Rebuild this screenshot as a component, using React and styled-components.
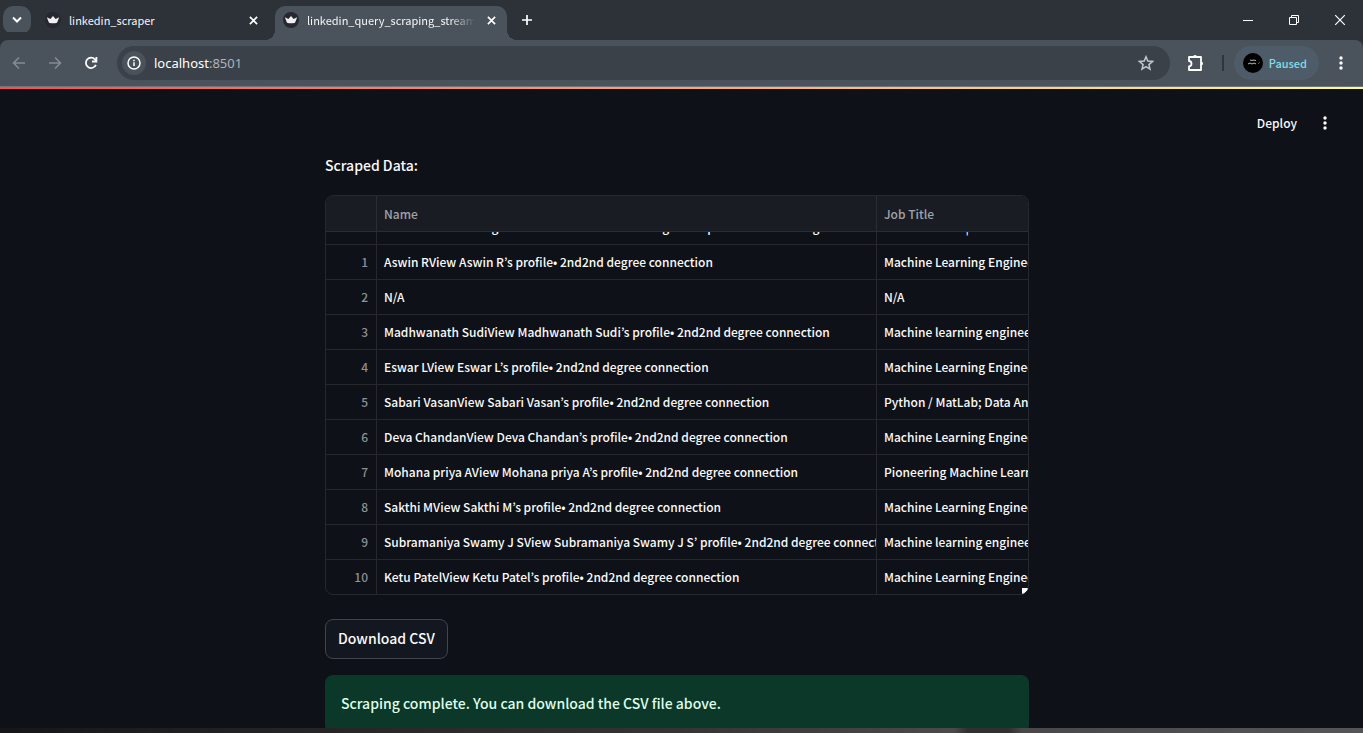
import React, { useEffect, useRef } from "react";
import styled, { createGlobalStyle } from "styled-components";

const Global = createGlobalStyle`
  * { box-sizing: border-box; }
  html, body { margin: 0; background: #0e1117; }
  button, input { font: inherit; color: inherit; border: 0; background: none; padding: 0; margin: 0; }
`;

const uiFont = `"Noto Sans", "Open Sans", sans-serif`;
const appFont = `"Noto Sans CJK KR", "Noto Sans", sans-serif`;

const Page = styled.div`
  display: flex;
  flex-direction: column;
  height: 100vh;
  overflow: hidden;
  background: #0e1117;
  color: #fafafa;
  font-family: ${appFont};
`;

/* ---------- browser tab strip ---------- */

const TabStrip = styled.header`
  display: flex;
  align-items: flex-end;
  flex: none;
  height: 40px;
  padding-left: 3px;
  background: #2d3138;
`;

const IconButton = styled.button`
  display: flex;
  align-items: center;
  justify-content: center;
  flex: none;
  width: ${(p) => p.$w || 28}px;
  height: ${(p) => p.$h || 28}px;
  border-radius: ${(p) => p.$r || 0}px;
  background: ${(p) => p.$bg || "none"};
  color: ${(p) => p.$color || "#ffffff"};
`;

const TabSearch = styled(IconButton)`
  align-self: center;
`;

const Tab = styled.div`
  position: relative;
  display: flex;
  align-items: center;
  flex: none;
  width: 232px;
  height: 34px;
  margin-left: 6px;
  padding: 0 8px 6px;
  gap: 8px;
  border-radius: 10px 10px 0 0;
  background: ${(p) => (p.$active ? "#4a525b" : "transparent")};

  &::before,
  &::after {
    content: "";
    display: ${(p) => (p.$active ? "block" : "none")};
    position: absolute;
    bottom: 0;
    width: 10px;
    height: 10px;
  }
  &::before {
    left: -10px;
    background: radial-gradient(circle at 0 0, transparent 10px, #4a525b 10px);
  }
  &::after {
    right: -10px;
    background: radial-gradient(circle at 100% 0, transparent 10px, #4a525b 10px);
  }
`;

const TabTitle = styled.span`
  flex: 1;
  overflow: hidden;
  white-space: nowrap;
  font-size: 11px;
  line-height: 20px;
  color: #f4f6f8;
  mask-image: ${(p) => (p.$fade ? "linear-gradient(to right, #000 85%, transparent)" : "none")};
`;

const WindowControls = styled.div`
  display: flex;
  margin-left: auto;
  align-self: stretch;
`;

/* ---------- browser toolbar ---------- */

const Toolbar = styled.nav`
  display: flex;
  align-items: center;
  flex: none;
  height: 47px;
  padding: 0 8px 0 5px;
  background: #4a525b;
  border-bottom: 1px solid #6d747c;
  border-radius: 8px 8px 0 0;
  box-shadow: 0 -8px 0 #2d3138;
`;

const NavButtons = styled.div`
  display: flex;
  gap: 8px;
  margin-right: 12px;
`;

const AddressBar = styled.div`
  display: flex;
  align-items: center;
  flex: 1;
  height: 34px;
  padding: 0 10px 0 5px;
  border-radius: 17px;
  background: #3b4149;
`;

const AddressText = styled.div`
  flex: 1;
  margin-left: 8px;
  font-family: ${uiFont};
  font-size: 13px;
  line-height: 20px;
  color: #aeb3b8;
`;

const Host = styled.span`
  color: #ffffff;
`;

const Divider = styled.span`
  width: 2px;
  height: 16px;
  margin-right: 10px;
  background: #30353c;
`;

const Profile = styled.button`
  display: flex;
  align-items: center;
  gap: 6px;
  height: 34px;
  margin-right: 8px;
  padding: 0 12px 0 9px;
  border-radius: 17px;
  background: #4d5c68;
  color: #80deea;
  font-size: 11px;
  font-weight: 500;
  line-height: 20px;
`;

/* ---------- page ---------- */

const Rainbow = styled.div`
  flex: none;
  height: 2px;
  background: linear-gradient(90deg, #ff4b4b, #fffd80);
`;

const Main = styled.main`
  flex: 1;
  min-height: 0;
  overflow: hidden;
`;

const AppHeader = styled.div`
  display: flex;
  align-items: flex-start;
  justify-content: flex-end;
  gap: 14px;
  height: 64px;
  padding: 20px 24px 0 0;
`;

const Deploy = styled.button`
  font-size: 12px;
  font-weight: 500;
  line-height: 28px;
`;

const ContentGutter = styled.div`
  padding-right: 9px;
`;

const Content = styled.section`
  max-width: 704px;
  margin: 0 auto;
`;

const Label = styled.p`
  margin: 0 0 18px;
  font-size: 14px;
  font-weight: 500;
  line-height: 24px;
`;

const Frame = styled.div`
  position: relative;
  height: 400px;
  border: 1px solid #262830;
  border-radius: 8px;
  overflow: hidden;
`;

const Scroller = styled.div`
  height: 100%;
  overflow: auto;
  scrollbar-width: none;
`;

const Table = styled.table`
  width: 751px;
  table-layout: fixed;
  border-collapse: separate;
  border-spacing: 0;
  font-size: 12px;
  font-weight: 500;
  line-height: 20px;
`;

const Col = styled.col`
  width: ${(p) => p.$w}px;
`;

const HeadCell = styled.th`
  position: sticky;
  top: 0;
  height: 36px;
  padding: 0 7px;
  text-align: left;
  font-weight: 500;
  color: #a0a2a8;
  background: #1a1c24;
  border-right: 1px solid #2b2d35;
  border-bottom: 1px solid #2b2d35;
`;

const Cell = styled.td`
  height: 35px;
  padding: 0 ${(p) => (p.$index ? 8 : 0)}px 0 7px;
  overflow: hidden;
  white-space: nowrap;
  text-align: ${(p) => (p.$index ? "right" : "left")};
  color: ${(p) => (p.$index ? "#8e9096" : "#fafafa")};
  border-right: 1px solid #26282e;
  border-bottom: 1px solid #26282e;

  tr:last-child > & {
    height: 34px;
    border-bottom: 0;
  }
`;

const Grip = styled.span`
  position: absolute;
  right: 0;
  bottom: 0;
  width: 6px;
  height: 6px;
  background: linear-gradient(135deg, #ffffff 60%, transparent 60%);
`;

const Download = styled.button`
  display: block;
  height: 40px;
  margin: 24px 0 16px;
  padding: 0 12px 2px;
  border: 1px solid #41444c;
  border-radius: 8px;
  background: #131720;
  font-size: 14px;
  font-weight: 500;
  line-height: 24px;
`;

const Success = styled.div`
  padding: 16px 16px 18px;
  border-radius: 8px;
  background: #0b3829;
  color: #dffde9;
  font-size: 14px;
  font-weight: 500;
  line-height: 24px;
`;

const DesktopEdge = styled.div`
  flex: none;
  height: 5px;
  background: linear-gradient(90deg, #161616, #262626 25%, #343434 50%, #4a4a4a 70%, #303030 71%, #303030 74%, #484848 75%, #555555);
`;

const rows = [
  ["Sarathkumar MurugesanView Sarathkumar Murugesan’s profile• 2nd2nd degree connection", "Data Scientist | Machine Learning"],
  ["Aswin RView Aswin R’s profile• 2nd2nd degree connection", "Machine Learning Engineer"],
  ["N/A", "N/A"],
  ["Madhwanath SudiView Madhwanath Sudi’s profile• 2nd2nd degree connection", "Machine learning engineer"],
  ["Eswar LView Eswar L’s profile• 2nd2nd degree connection", "Machine Learning Engineer"],
  ["Sabari VasanView Sabari Vasan’s profile• 2nd2nd degree connection", "Python / MatLab; Data Analyst"],
  ["Deva ChandanView Deva Chandan’s profile• 2nd2nd degree connection", "Machine Learning Engineer"],
  ["Mohana priya AView Mohana priya A’s profile• 2nd2nd degree connection", "Pioneering Machine Learning"],
  ["Sakthi MView Sakthi M’s profile• 2nd2nd degree connection", "Machine Learning Engineer"],
  ["Subramaniya Swamy J SView Subramaniya Swamy J S’ profile• 2nd2nd degree connection", "Machine learning engineer"],
  ["Ketu PatelView Ketu Patel’s profile• 2nd2nd degree connection", "Machine Learning Engineer"],
];

const stroke = { fill: "none", stroke: "currentColor" };

const Crown = () => (
  <svg width="16" height="16" viewBox="0 0 16 16" aria-hidden="true">
    <circle cx="8" cy="8" r="8" fill="#262730" />
    <path d="M1.800 5.200 5.400 7 8 4l2.600 3L14.200 5.200 12 10.800c-2.500.7-5.500.7-8 0z" fill="#f0f0f2" />
  </svg>
);
const Close = ({ size = 9, w = 1.8 }) => (
  <svg width={size} height={size} viewBox="0 0 10 10" {...stroke} strokeWidth={w}>
    <path d="M1 1l8 8M9 1L1 9" />
  </svg>
);
const Chevron = () => (
  <svg width="10" height="8" viewBox="0 0 10 8" {...stroke} strokeWidth="2">
    <path d="M1 1.500 5 5.500 9 1.500" />
  </svg>
);
const Plus = () => (
  <svg width="12" height="12" viewBox="0 0 12 12" {...stroke} strokeWidth="1.700">
    <path d="M6 1v10M1 6h10" />
  </svg>
);
const Arrow = ({ flip }) => (
  <svg width="14" height="14" viewBox="0 0 14 14" {...stroke} strokeWidth="1.600">
    <path d={flip ? "M1 7h11M7 1.500 12.500 7 7 12.500" : "M13 7H2M7 1.500 1.500 7 7 12.500"} />
  </svg>
);
const Reload = () => (
  <svg width="14" height="14" viewBox="0 0 14 14" {...stroke} strokeWidth="1.800">
    <path d="M11.900 8.800A5.200 5.200 0 1 1 11 3.400L12.500 5" />
    <path d="M12.400 1v4.500H8" />
  </svg>
);
const Info = () => (
  <svg width="14" height="14" viewBox="0 0 14 14" {...stroke} strokeWidth="1.500">
    <circle cx="7" cy="7" r="6" />
    <path d="M7 6.200V10M7 3.800v1.400" />
  </svg>
);
const Star = () => (
  <svg width="16" height="16" viewBox="0 0 16 16" {...stroke} strokeWidth="1.500">
    <path d="M8 1.800l1.800 4.300 4.700.4-3.600 3.100 1.100 4.600L8 11.700l-4 2.500 1.100-4.600L1.500 6.500l4.700-.4z" />
  </svg>
);
const Puzzle = () => (
  <svg width="18" height="18" viewBox="0 0 18 18" {...stroke} strokeWidth="1.800">
    <path d="M2 3h12v13H2v-3.500c3.300-.3 3.300-5.200 0-5.500z" strokeLinejoin="round" />
    <path d="M6 3a2 2 0 0 1 4 0zM14 7.500a2 2 0 0 1 0 4z" fill="currentColor" stroke="none" />
  </svg>
);
const Dots = () => (
  <svg width="4" height="14" viewBox="0 0 4 14" fill="currentColor">
    <circle cx="2" cy="2" r="1.700" />
    <circle cx="2" cy="7" r="1.700" />
    <circle cx="2" cy="12" r="1.700" />
  </svg>
);
const Avatar = () => (
  <svg width="20" height="20" viewBox="0 0 20 20" aria-hidden="true">
    <circle cx="10" cy="10" r="10" fill="#000" />
    <path d="M7 7l2 .5 1-.5 3 .5M5 11l2-1 2 1 2-1 2 1" fill="none" stroke="#bbb" />
    <path d="M15 11l2-2" stroke="#8a4a35" />
  </svg>
);
const Minimize = () => (
  <svg width="10" height="10" viewBox="0 0 10 10" {...stroke}>
    <path d="M0 5.500h10" />
  </svg>
);
const Restore = () => (
  <svg width="10" height="10" viewBox="0 0 10 10" {...stroke}>
    <path d="M.5 2.500h7v7h-7zM2.500 2.500v-2h7v7h-2" />
  </svg>
);

export default function App() {
  const scroller = useRef(null);
  useEffect(() => {
    scroller.current.scrollTop = scroller.current.scrollHeight;
  }, []);

  return (
    <Page>
      <Global />
      <TabStrip>
        <TabSearch $r={10} $bg="#4a525b" aria-label="Search tabs"><Chevron /></TabSearch>
        <Tab>
          <Crown />
          <TabTitle>linkedin_scraper</TabTitle>
          <IconButton $w={16} $h={16} aria-label="Close tab"><Close /></IconButton>
        </Tab>
        <Tab $active>
          <Crown />
          <TabTitle $fade>linkedin_query_scraping_streamlit</TabTitle>
          <IconButton $w={16} $h={16} aria-label="Close tab"><Close /></IconButton>
        </Tab>
        <IconButton $w={40} $h={40} aria-label="New tab"><Plus /></IconButton>
        <WindowControls>
          <IconButton $w={46} $h={40} aria-label="Minimize"><Minimize /></IconButton>
          <IconButton $w={46} $h={40} aria-label="Restore"><Restore /></IconButton>
          <IconButton $w={46} $h={40} aria-label="Close window"><Close size={12} w={1} /></IconButton>
        </WindowControls>
      </TabStrip>
      <Toolbar>
        <NavButtons>
          <IconButton $color="#858b92" aria-label="Back"><Arrow /></IconButton>
          <IconButton $color="#858b92" aria-label="Forward"><Arrow flip /></IconButton>
          <IconButton aria-label="Reload"><Reload /></IconButton>
        </NavButtons>
        <AddressBar>
          <IconButton $w={24} $h={24} $r={12} $bg="#4a525b" aria-label="Site information"><Info /></IconButton>
          <AddressText><Host>localhost</Host>:8501</AddressText>
          <IconButton $color="#c3c7cb" aria-label="Bookmark"><Star /></IconButton>
        </AddressBar>
        <IconButton $w={52} aria-label="Extensions"><Puzzle /></IconButton>
        <Divider />
        <Profile><Avatar />Paused</Profile>
        <IconButton aria-label="Menu"><Dots /></IconButton>
      </Toolbar>
      <Rainbow />
      <Main>
        <AppHeader>
          <Deploy>Deploy</Deploy>
          <IconButton aria-label="App menu"><Dots /></IconButton>
        </AppHeader>
        <ContentGutter>
          <Content>
            <Label>Scraped Data:</Label>
            <Frame>
              <Scroller ref={scroller}>
                <Table>
                  <colgroup><Col $w={51} /><Col $w={500} /><Col $w={200} /></colgroup>
                  <thead>
                    <tr>
                      <HeadCell aria-label="Index" />
                      <HeadCell>Name</HeadCell>
                      <HeadCell>Job Title</HeadCell>
                    </tr>
                  </thead>
                  <tbody>
                    {rows.map(([name, job], i) => (
                      <tr key={i}>
                        <Cell $index>{i}</Cell>
                        <Cell>{name}</Cell>
                        <Cell>{job}</Cell>
                      </tr>
                    ))}
                  </tbody>
                </Table>
              </Scroller>
              <Grip />
            </Frame>
            <Download>Download CSV</Download>
            <Success role="status">Scraping complete. You can download the CSV file above.</Success>
          </Content>
        </ContentGutter>
      </Main>
      <DesktopEdge />
    </Page>
  );
}
